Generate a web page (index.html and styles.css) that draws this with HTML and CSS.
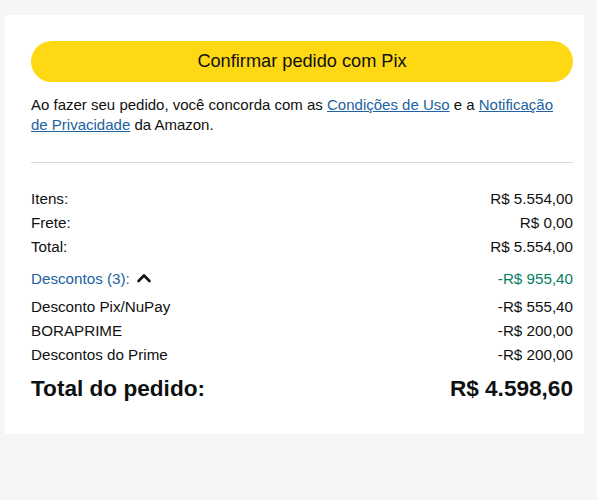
FILE: index.html
```html
<!DOCTYPE html>
<html lang="pt-BR">
<head>
<meta charset="utf-8">
<link rel="stylesheet" href="styles.css">
</head>
<body>
<div class="card">
  <button class="pix-btn">Confirmar pedido com Pix</button>
  <p class="terms">Ao fazer seu pedido, você concorda com as <a href="#">Condições de Uso</a> e a <a href="#">Notificação</a> <a href="#">de Privacidade</a> da Amazon.</p>
  <hr class="sep">
  <div class="summary">
    <div class="row"><span>Itens:</span><span>R$ 5.554,00</span></div>
    <div class="row"><span>Frete:</span><span>R$ 0,00</span></div>
    <div class="row"><span>Total:</span><span>R$ 5.554,00</span></div>
    <div class="row disc-head"><span class="disc-label">Descontos (3): <svg class="chev" width="16" height="11" viewBox="0 0 16 11"><path d="M2.5 9 L8 3.5 L13.5 9" fill="none" stroke="#0f1111" stroke-width="2.6" stroke-linecap="round" stroke-linejoin="round"/></svg></span><span class="green">-R$ 955,40</span></div>
    <div class="row sub first"><span>Desconto Pix/NuPay</span><span>-R$ 555,40</span></div>
    <div class="row sub"><span>BORAPRIME</span><span>-R$ 200,00</span></div>
    <div class="row sub"><span>Descontos do Prime</span><span>-R$ 200,00</span></div>
    <div class="row grand"><span>Total do pedido:</span><span>R$ 4.598,60</span></div>
  </div>
</div>
</body>
</html>
```
FILE: styles.css
```css
html, body {
  margin: 0;
  padding: 0;
  background: #f6f6f6;
}
body {
  font-family: "Liberation Sans", Arial, sans-serif;
  color: #0f1111;
  padding-top: 15px;
  height: 500px;
  box-sizing: border-box;
}
.card {
  background: #ffffff;
  margin-left: 5px;
  margin-right: 13px;
  padding: 26px 11px 0 26px;
  height: 419px;
  box-sizing: border-box;
}
.pix-btn {
  display: block;
  width: 100%;
  height: 41px;
  border: none;
  border-radius: 21px;
  background: #ffd814;
  color: #0f1111;
  font-family: inherit;
  font-size: 18.2px;
  padding: 0;
  cursor: pointer;
}
.terms {
  margin: 13px 0 0 0;
  font-size: 15px;
  line-height: 20px;
}
.terms a {
  color: #2162a1;
  text-decoration: underline;
}
.sep {
  border: none;
  border-top: 1px solid #d5d9d9;
  margin: 27px 0 0 0;
  height: 0;
}
.summary {
  margin-top: 23px;
  font-size: 15.2px;
}
.row {
  display: flex;
  justify-content: space-between;
  align-items: center;
  height: 24px;
}
.disc-head {
  margin-top: 8px;
}
.disc-label {
  color: #2162a1;
  display: flex;
  align-items: center;
  gap: 6px;
}
.chev {
  display: block;
  margin-top: -2px;
}
.green {
  color: #067d62;
}
.sub.first {
  margin-top: 4px;
}
.grand {
  margin-top: 8px;
  height: 30px;
  font-size: 22.6px;
  font-weight: bold;
}
```
